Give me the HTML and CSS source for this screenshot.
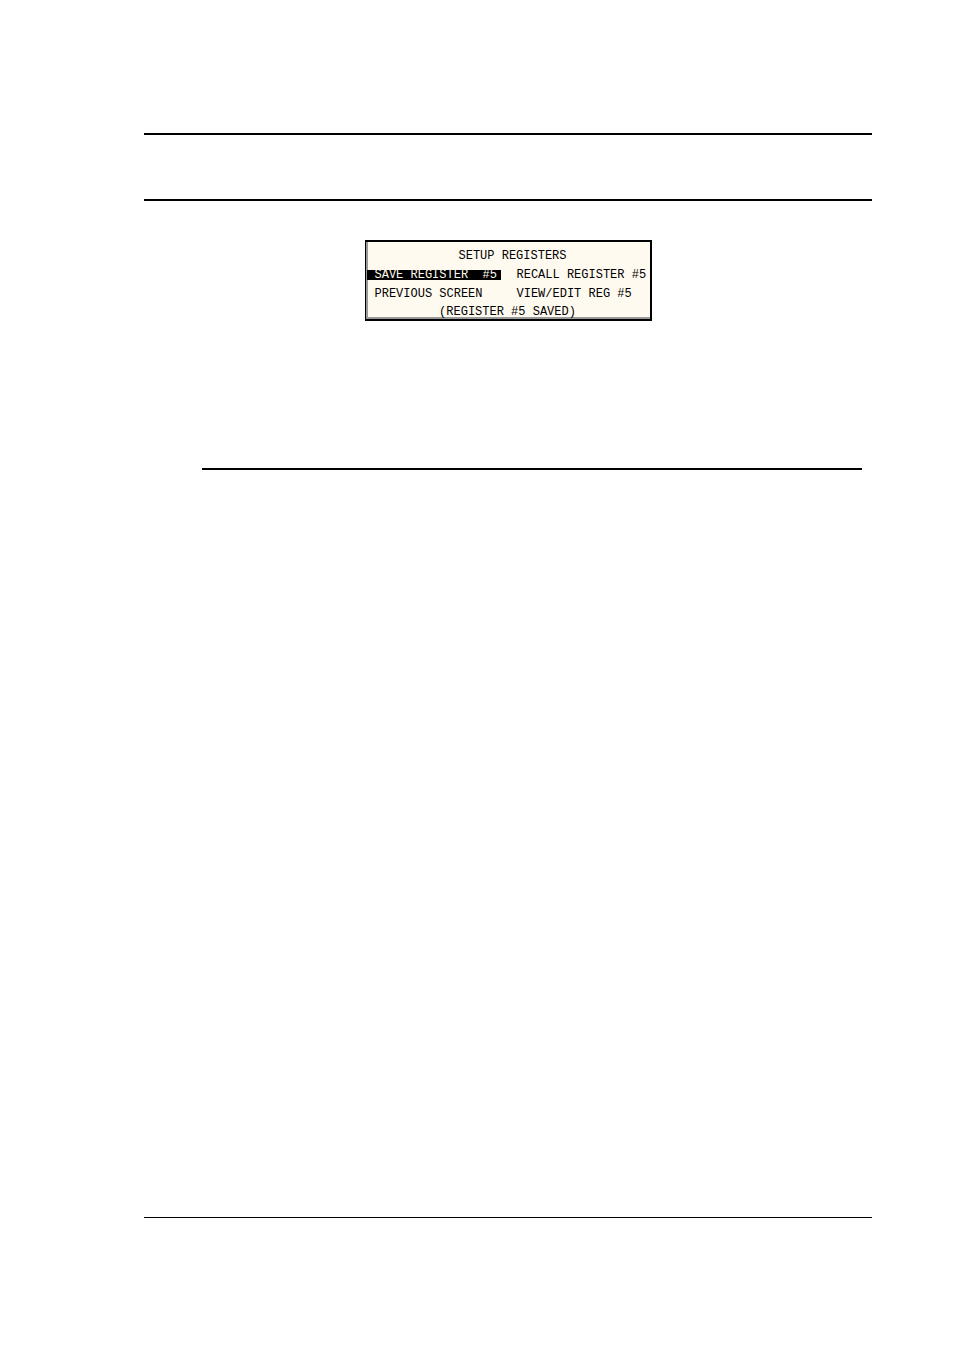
FILE: index.html
```
<!DOCTYPE html>
<html lang="en">

	<head>
		<meta charset="UTF-8">
		<title>Setup Registers</title>
		<link rel="stylesheet" href="styles.css">
	</head>

	<body>
		<div class="page">
			<header class="page-head"></header>
			<main class="content">
				<!-- LCD screen -->
				<div class="screen">
					<h1 class="screen-title">SETUP REGISTERS</h1>
					<div class="menu">
						<button type="button" class="item active">SAVE REGISTER  #5</button>
						<button type="button" class="item">RECALL REGISTER #5</button>
						<button type="button" class="item">PREVIOUS SCREEN</button>
						<button type="button" class="item">VIEW/EDIT REG #5</button>
					</div>
					<p class="status">(REGISTER #5 SAVED)</p>
				</div>
				<hr class="section-rule">
			</main>
			<footer class="page-foot"></footer>
		</div>
	</body>

</html>
```
FILE: styles.css
```
* {
	box-sizing: border-box;
	margin: 0;
	padding: 0;
}

body {
	background-color: #fff;
	color: #000;
}

.page {
	display: flex;
	flex-direction: column;
	min-height: 100vh;
	padding: 133px 82px 0 144px;
}

.page-head {
	height: 68px;
	border-top: 2px solid #000;
	border-bottom: 2px solid #000;
}

.content {
	flex: 1;
	padding-top: 39px;
}

/* LCD screen */
.screen {
	width: 287px;
	margin: 0 auto;
	padding-top: 5px;
	border: 2px solid #000;
	border-left-width: 1px;
	box-shadow: inset 2px -2px 0 #999;
	background-color: #fffaf0;
	font: 12px/19px "Liberation Mono", monospace;
}

.screen-title {
	padding-left: 10px;
	font-size: 12px;
	font-weight: normal;
	text-align: center;
}

.menu {
	display: grid;
	grid-template-columns: 134px 1fr;
	column-gap: 8px;
	row-gap: 9px;
	padding: 4px 0 7px 1px;
}

.item {
	height: 10px;
	padding-left: 8px;
	border: 0;
	background: none;
	color: #000;
	font: 12px/10px "Liberation Mono", monospace;
	text-align: left;
	white-space: pre;
	cursor: pointer;
}

.item.active {
	background-color: #000;
	color: #fffaf0;
}

.status {
	line-height: 13px;
	text-align: center;
}

.section-rule {
	margin: 147px 10px 0 58px;
	border: 0;
	border-top: 2px solid #000;
}

.page-foot {
	height: 133px;
	border-top: 1px solid #000;
}
```
